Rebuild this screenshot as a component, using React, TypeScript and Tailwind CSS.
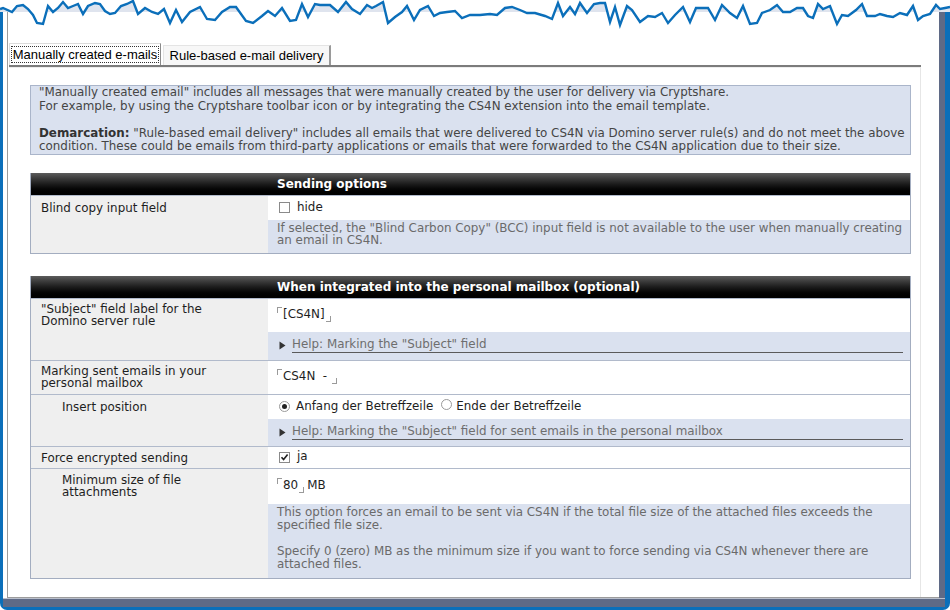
import type { ReactNode } from "react";

// jagged top edge of the window capture
const WAVE: [number, number][] = [
  [0, 9], [3, 8], [12, 12], [17, 6], [23, 5], [28, 9], [33, 15], [37, 23], [43, 24], [48, 6], [53, 12], [58, 8],
  [63, 2], [68, 8], [73, 6], [78, 4], [83, 14], [88, 6], [95, 3], [100, 4], [105, 11], [110, 14], [115, 13],
  [121, 6], [127, 4], [133, 1], [138, 14], [145, 8], [152, 12], [158, 14], [164, 9], [170, 23], [176, 10],
  [182, 22], [190, 12], [200, 7], [207, 19], [215, 20], [222, 12], [230, 7], [236, 7], [246, 21], [253, 23],
  [262, 16], [268, 11], [275, 16], [282, 8], [290, 21], [296, 20], [302, 4], [308, 17], [315, 4], [320, 5],
  [330, 5], [338, 12], [346, 2], [352, 9], [360, 14], [367, 5], [372, 8], [376, 6], [383, 2], [388, 23],
  [395, 17], [402, 12], [407, 6], [414, 20], [420, 10], [428, 6], [434, 16], [440, 13], [447, 12], [455, 11],
  [462, 18], [470, 15], [480, 15], [490, 14], [497, 15], [505, 8], [512, 7], [520, 10], [527, 13], [535, 13],
  [545, 16], [552, 19], [558, 3], [563, 16], [570, 7], [575, 14], [580, 3], [587, 13], [594, 4], [600, 3],
  [605, 3], [610, 22], [615, 7], [620, 25], [627, 6], [632, 10], [640, 22], [648, 16], [655, 17], [662, 13],
  [668, 23], [675, 15], [683, 7], [690, 22], [696, 8], [703, 8], [708, 8], [715, 20], [722, 5], [730, 13],
  [737, 18], [743, 6], [750, 24], [757, 23], [762, 13], [770, 10], [777, 5], [783, 12], [790, 12], [797, 8],
  [803, 8], [808, 16], [813, 18], [818, 4], [823, 9], [830, 6], [837, 24], [842, 15], [848, 16], [856, 10],
  [862, 4], [867, 16], [875, 16], [880, 14], [887, 16], [893, 17], [900, 13], [907, 15], [913, 6], [918, 20],
  [923, 16], [930, 14], [936, 5], [940, 9], [945, 8], [950, 7],
];

const TornEdge = () => {
  const line = WAVE.map(([x, y]) => `${x},${y}`).join(" ");
  return (
    <svg className="absolute left-0 top-0" width="950" height="30" viewBox="0 0 950 30">
      <defs>
        <clipPath id="titleband">
          <rect x="0" y="0" width="950" height="12" />
        </clipPath>
      </defs>
      <polygon points={`0,0 ${line} 950,0`} fill="#ffffff" />
      <polygon points={`${line} 950,30 0,30`} fill="#dfe4ee" clipPath="url(#titleband)" />
      <polyline points={line} fill="none" stroke="#0b6fba" strokeWidth="2.4" strokeLinejoin="miter" />
    </svg>
  );
};

const Field = ({ children }: { children: ReactNode }) => (
  <span className="inline-flex items-start">
    <span className="mt-[1px] mr-[1px] inline-block h-[6px] w-[5px] border-l border-t border-[#9a9a9a]" />
    <span>{children}</span>
    <span className="mt-[10px] ml-[1px] inline-block h-[6px] w-[5px] border-b border-r border-[#9a9a9a]" />
  </span>
);

const Checkbox = ({ checked }: { checked?: boolean }) => (
  <span className="inline-flex h-[11px] w-[11px] items-center justify-center border border-[#8a8a8a] bg-white">
    {checked && (
      <svg width="9" height="9" viewBox="0 0 9 9">
        <path d="M1.5 4.2 L3.6 6.6 L7.6 1.6" fill="none" stroke="#222" strokeWidth="1.6" />
      </svg>
    )}
  </span>
);

const Radio = ({ checked }: { checked?: boolean }) => (
  <span className="inline-flex h-[11px] w-[11px] items-center justify-center rounded-full border border-[#9a9a9a] bg-white">
    {checked && <span className="h-[5px] w-[5px] rounded-full bg-[#222]" />}
  </span>
);

const Header = ({ title }: { title: string }) => (
  <div className="flex h-[22px] items-center bg-gradient-to-b from-[#5c5c5c] via-[#1c1c1c] to-black">
    <div className="w-[237px]" />
    <div className="pl-[9px] text-[12px] font-bold text-white">{title}</div>
  </div>
);

const Row = ({
  label,
  indent,
  pt,
  children,
}: {
  label: ReactNode;
  indent?: boolean;
  pt: string;
  children: ReactNode;
}) => (
  <div className="flex border-t border-[#b1bacb]">
    <div className={`w-[237px] shrink-0 bg-[#efefef] leading-[12.5px] text-[#1e1e1e] ${indent ? "pl-[31px]" : "pl-[10px]"} ${pt}`}>
      {label}
    </div>
    <div className="flex flex-1 flex-col">{children}</div>
  </div>
);

const HelpLink = ({ text, h }: { text: string; h: string }) => (
  <div className={`flex items-start bg-[#dae1ef] pl-[11px] pr-[7px] pt-[6px] ${h}`}>
    <svg width="7" height="9" viewBox="0 0 7 9" className="mt-[3px] shrink-0">
      <path d="M0.5 0.5 L6.5 4.5 L0.5 8.5 Z" fill="#333" />
    </svg>
    <div className="ml-[6px] flex-1 border-b border-[#5a5a5a] pb-[1px] leading-[13px] text-[#6e6e6e]">{text}</div>
  </div>
);

export default function App() {
  return (
    <div className="relative h-[610px] w-[950px] overflow-hidden bg-white font-['DejaVu_Sans',sans-serif] text-[11.9px]">
      <div className="flex h-full flex-col rounded-b-[7px] border-b-[3px] border-l-[3px] border-r-[5px] border-[#0b6fba]">
        <div className="flex min-h-0 flex-1">
          <div className="flex flex-1 flex-col pl-[4px]">
            <div className="flex flex-1 flex-col border-b border-l border-[#9c9c9c] pl-[1px] pr-[18px] pt-[43px]">
              {/* tabs */}
              <div className="flex h-[22px] items-end whitespace-nowrap font-['Liberation_Sans',sans-serif] text-[13px] text-black">
                <div className="flex h-[22px] w-[152px] items-center border-l border-r border-t border-[#dcdcdc] border-r-[#8a8a8a] bg-white px-[1px]">
                  <span className="flex h-[17px] w-full items-center justify-center border border-dotted border-[#333]">
                    Manually created e-mails
                  </span>
                </div>
                <div className="ml-[2px] flex h-[20px] w-[168px] items-center justify-center border-l border-r-2 border-t border-[#e4e4e4] border-r-[#9a9a9a] bg-[#f7f7f7]">
                  Rule-based e-mail delivery
                </div>
              </div>
              <div className="h-[2px] bg-[#7c7c7c]" />
              <div className="flex-1 border-r border-t border-[#e6e6e6] border-t-[#eeeeee] pl-[21px] pr-[9px] pt-[17px]">
                {/* intro */}
                <div className="whitespace-nowrap border border-[#aab5ca] bg-[#dae1ef] pl-[8px] leading-[13.5px] text-[#454545]">
                  "Manually created email" includes all messages that were manually created by the user for delivery via Cryptshare.
                  <br />
                  For example, by using the Cryptshare toolbar icon or by integrating the CS4N extension into the email template.
                  <br />
                  <br />
                  <b className="text-[#333]">Demarcation:</b> "Rule-based email delivery" includes all emails that were delivered to CS4N via Domino server rule(s) and do not meet the above
                  <br />
                  condition. These could be emails from third-party applications or emails that were forwarded to the CS4N application due to their size.
                </div>

                {/* sending options */}
                <div className="mt-[18px] border border-[#a3adc0] border-t-0">
                  <Header title="Sending options" />
                  <Row label="Blind copy input field" pt="pt-[6px]">
                    <div className="flex h-[24px] items-center gap-[7px] bg-white pl-[11px] text-[#1e1e1e]">
                      <Checkbox />
                      <span>hide</span>
                    </div>
                    <div className="h-[33px] whitespace-nowrap bg-[#dae1ef] pl-[9px] pt-[2px] leading-[12.5px] text-[#6a6a6a]">
                      If selected, the "Blind Carbon Copy" (BCC) input field is not available to the user when manually creating
                      <br />
                      an email in CS4N.
                    </div>
                  </Row>
                </div>

                {/* personal mailbox */}
                <div className="mt-[22px] border border-[#a3adc0] border-t-0">
                  <Header title="When integrated into the personal mailbox (optional)" />
                  <Row
                    label={
                      <>
                        "Subject" field label for the
                        <br />
                        Domino server rule
                      </>
                    }
                    pt="pt-[4px]"
                  >
                    <div className="flex h-[33px] items-center bg-white pl-[9px] text-[#1e1e1e]">
                      <Field>[CS4N]</Field>
                    </div>
                    <HelpLink text={'Help: Marking the "Subject" field'} h="h-[28px]" />
                  </Row>
                  <Row
                    label={
                      <>
                        Marking sent emails in your
                        <br />
                        personal mailbox
                      </>
                    }
                    pt="pt-[4px]"
                  >
                    <div className="flex h-[33px] items-center bg-white pl-[9px] text-[#1e1e1e]">
                      <Field>CS4N&nbsp; -&nbsp;</Field>
                    </div>
                  </Row>
                  <Row label="Insert position" indent pt="pt-[6px]">
                    <div className="flex h-[24px] items-center bg-white pl-[11px] text-[#1e1e1e]">
                      <Radio checked />
                      <span className="ml-[6px]">Anfang der Betreffzeile</span>
                      <span className="ml-[8px]">
                        <Radio />
                      </span>
                      <span className="ml-[4px]">Ende der Betreffzeile</span>
                    </div>
                    <HelpLink text={'Help: Marking the "Subject" field for sent emails in the personal mailbox'} h="h-[27px]" />
                  </Row>
                  <Row label="Force encrypted sending" pt="pt-[5px]">
                    <div className="flex h-[21px] items-center gap-[7px] bg-white pl-[11px] text-[#1e1e1e]">
                      <Checkbox checked />
                      <span>ja</span>
                    </div>
                  </Row>
                  <Row
                    label={
                      <>
                        Minimum size of file
                        <br />
                        attachments
                      </>
                    }
                    indent
                    pt="pt-[5px]"
                  >
                    <div className="flex h-[35px] items-center bg-white pl-[9px] text-[#1e1e1e]">
                      <Field>80</Field>
                      <span className="ml-[3px]">MB</span>
                    </div>
                    <div className="h-[74px] whitespace-nowrap bg-[#dae1ef] pl-[9px] pt-[2px] leading-[13px] text-[#6a6a6a]">
                      This option forces an email to be sent via CS4N if the total file size of the attached files exceeds the
                      <br />
                      specified file size.
                      <br />
                      <br />
                      Specify 0 (zero) MB as the minimum size if you want to force sending via CS4N whenever there are
                      <br />
                      attached files.
                    </div>
                  </Row>
                </div>
              </div>
            </div>
          </div>
          <div className="w-[6px] bg-[#5f6a86]" />
        </div>
        <div className="h-[1px] bg-[#b9bfcc]" />
        <div className="h-[8px] bg-[#5f6a86]" />
      </div>
      <TornEdge />
    </div>
  );
}
